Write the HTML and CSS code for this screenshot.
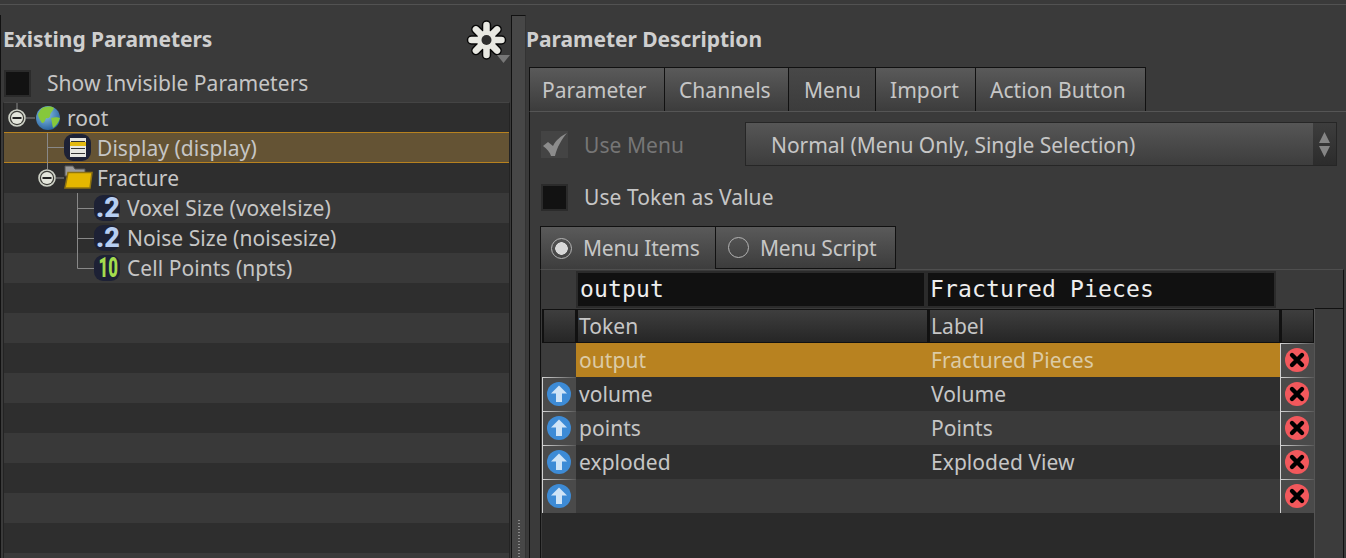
FILE: index.html
```html
<!DOCTYPE html>
<html lang="en">
<head>
<meta charset="utf-8">
<title>Parameter Editor</title>
<link rel="stylesheet" href="styles.css">
</head>
<body>
<svg class="defs" width="0" height="0" aria-hidden="true">
  <defs>
    <radialGradient id="sea" cx="40%" cy="35%" r="70%"><stop offset="0" stop-color="#8cc4ea"/><stop offset="1" stop-color="#25609c"/></radialGradient>
    <symbol id="expander" viewBox="0 0 18 18">
      <circle cx="9" cy="9" r="8" fill="#3d3d38" stroke="#cfd3c8" stroke-width="1.6"/>
      <circle cx="9" cy="9" r="6" fill="#e4e6dc"/>
      <rect x="4.5" y="8" width="9" height="2" fill="#222"/>
    </symbol>
    <symbol id="up" viewBox="0 0 26 26">
      <circle cx="13" cy="13" r="12" fill="#3d8bd6"/>
      <path d="M13 4.5 L21 12.5 H16 V21 H10 V12.5 H5 Z" fill="#cfe4f7"/>
    </symbol>
    <symbol id="del" viewBox="0 0 26 26">
      <circle cx="13" cy="13" r="12" fill="#f2585c"/>
      <path d="M8 8 L18 18 M18 8 L8 18" stroke="#000" stroke-width="4.4" stroke-linecap="round"/>
    </symbol>
    <symbol id="badge" viewBox="0 0 28 28">
      <rect x="1" y="1" width="26" height="26" rx="9" fill="#1d2135"/>
    </symbol>
  </defs>
</svg>

<div class="topline"></div>
<div class="main">
  <section class="left">
    <div class="left-head">
      <h2 class="title">Existing Parameters</h2>
      <svg class="gear" width="46" height="50" viewBox="0 0 46 50">
        <g transform="translate(21.500 24)">
          <g stroke="#000" stroke-width="9.500" stroke-linecap="round" opacity=".85">
            <path d="M0 -15V15M-15 0H15M-10.600 -10.600L10.600 10.600M10.600 -10.600L-10.600 10.600"/>
          </g>
          <g stroke="#e8e8e2" stroke-width="6.500" stroke-linecap="round">
            <path d="M0 -15V15M-15 0H15M-10.600 -10.600L10.600 10.600M10.600 -10.600L-10.600 10.600"/>
          </g>
          <circle r="9.500" fill="#e8e8e2"/>
          <circle r="5" fill="#2e2e2e"/>
        </g>
        <path d="M32 39H45L38.500 47Z" fill="#777"/>
      </svg>
    </div>
    <label class="check-row">
      <span class="box"></span>
      <span class="label">Show Invisible Parameters</span>
    </label>
    <div class="tree">
      <div class="row dark">
        <svg class="ind w60" viewBox="0 0 60 30">
          <path d="M13 0V7M22 15H31" stroke="#888" fill="none"/>
          <use href="#expander" x="4" y="6" width="18" height="18"/>
          <circle cx="44" cy="15" r="12" fill="url(#sea)"/>
          <path d="M37 6C41 3 47 3 50 5C49 8 47 9 46 12C47 14 44 16 42 15C41 18 40 20 38 20C36 17 34 14 34 11C35 9 36 8 37 6ZM47 15C50 14 54 14 56 15C55 19 52 23 49 25C48 22 48 18 47 15Z" fill="#86c83c"/>
        </svg>
        <span class="name">root</span>
      </div>
      <div class="row sel">
        <svg class="ind w90" viewBox="0 0 90 30">
          <path d="M43.500 0V30M43.500 14.500H60" stroke="#888" fill="none"/>
          <rect x="60" y="1" width="27" height="27" rx="9" fill="#1d2135"/>
          <rect x="66" y="5" width="16" height="19" fill="#e6e6e0"/>
          <rect x="66" y="9" width="16" height="4" fill="#e3b90f"/>
          <path d="M67 8.500H81M67 15.500H81M67 20.500H81" stroke="#333" stroke-width="1.200"/>
        </svg>
        <span class="name">Display (display)</span>
      </div>
      <div class="row dark">
        <svg class="ind w90" viewBox="0 0 90 30">
          <path d="M43.500 0V6M52 15H60" stroke="#888" fill="none"/>
          <use href="#expander" x="34" y="6" width="18" height="18"/>
          <path d="M61 3H69L71 6H81V13H61Z" fill="#9c9c9c" stroke="#555"/>
          <path d="M64 9.500H88L86 25H61Z" fill="#e4b700" stroke="#8f7410" stroke-width="1.500"/>
        </svg>
        <span class="name">Fracture</span>
      </div>
      <div class="row light">
        <svg class="ind w120" viewBox="0 0 120 30">
          <path d="M73.500 0V30M73.500 15.500H90" stroke="#888" fill="none"/>
          <use href="#badge" x="89" y="1" width="28" height="28"/>
          <text class="glyph blue" x="92" y="24">.2</text>
        </svg>
        <span class="name">Voxel Size (voxelsize)</span>
      </div>
      <div class="row dark">
        <svg class="ind w120" viewBox="0 0 120 30">
          <path d="M73.500 0V30M73.500 15.500H90" stroke="#888" fill="none"/>
          <use href="#badge" x="89" y="1" width="28" height="28"/>
          <text class="glyph blue" x="92" y="24">.2</text>
        </svg>
        <span class="name">Noise Size (noisesize)</span>
      </div>
      <div class="row light">
        <svg class="ind w120" viewBox="0 0 120 30">
          <path d="M73.500 0V15.500H90" stroke="#888" fill="none"/>
          <use href="#badge" x="89" y="1" width="28" height="28"/>
          <text class="glyph green" transform="translate(94.500 24) scale(.62 1)">10</text>
        </svg>
        <span class="name">Cell Points (npts)</span>
      </div>
      <div class="row dark"></div>
      <div class="row light"></div>
      <div class="row dark"></div>
      <div class="row light"></div>
      <div class="row dark"></div>
      <div class="row light"></div>
      <div class="row dark"></div>
      <div class="row light"></div>
      <div class="row dark"></div>
    </div>
  </section>

  <div class="splitter"><span class="grip"></span></div>

  <section class="right">
    <h2 class="title right-title">Parameter Description</h2>
    <nav class="tabs">
      <span class="tab t1">Parameter</span>
      <span class="tab t2">Channels</span>
      <span class="tab t3 active">Menu</span>
      <span class="tab t4">Import</span>
      <span class="tab t5">Action Button</span>
    </nav>
    <div class="panel">
      <div class="menu-row">
        <span class="box disabled">
          <svg width="27" height="27" viewBox="0 0 27 27"><path d="M2 15L7 11L12 15C15 9 20 5 26 2C21 8 16 16 14 25H10C9 21 6 18 2 15Z" fill="#8c8c8c"/></svg>
        </span>
        <span class="label dim">Use Menu</span>
        <div class="select">
          <span class="select-text">Normal (Menu Only, Single Selection)</span>
          <span class="select-arrows">
            <svg width="23" height="44" viewBox="0 0 23 44"><path d="M6 21L11.500 10L17 21ZM6 24H17L11.500 35Z" fill="#858585"/></svg>
          </span>
        </div>
      </div>
      <label class="token-row">
        <span class="box"></span>
        <span class="label">Use Token as Value</span>
      </label>
      <div class="subtabs">
        <span class="subtab s1"><i class="radio on"></i>Menu Items</span>
        <span class="subtab s2"><i class="radio"></i>Menu Script</span>
      </div>
      <div class="frame">
        <div class="table">
          <div class="editors">
            <span class="edit e1">output</span>
            <span class="edit e2">Fractured Pieces</span>
          </div>
          <div class="grid">
            <div class="cell head c-side"></div>
            <div class="cell head c-token">Token</div>
            <div class="cell head c-label">Label</div>
            <div class="cell head c-side2"></div>

            <div class="cell blank"></div>
            <div class="cell chosen">output</div>
            <div class="cell chosen">Fractured Pieces</div>
            <div class="cell btn"><svg class="ic"><use href="#del"/></svg></div>

            <div class="cell btn"><svg class="ic"><use href="#up"/></svg></div>
            <div class="cell dark">volume</div>
            <div class="cell dark col2">Volume</div>
            <div class="cell btn"><svg class="ic"><use href="#del"/></svg></div>

            <div class="cell btn"><svg class="ic"><use href="#up"/></svg></div>
            <div class="cell light">points</div>
            <div class="cell light col2">Points</div>
            <div class="cell btn"><svg class="ic"><use href="#del"/></svg></div>

            <div class="cell btn"><svg class="ic"><use href="#up"/></svg></div>
            <div class="cell dark">exploded</div>
            <div class="cell dark col2">Exploded View</div>
            <div class="cell btn"><svg class="ic"><use href="#del"/></svg></div>

            <div class="cell btn"><svg class="ic"><use href="#up"/></svg></div>
            <div class="cell light"></div>
            <div class="cell light col2"></div>
            <div class="cell btn"><svg class="ic"><use href="#del"/></svg></div>
          </div>
          <div class="table-rest"></div>
        </div>
        <div class="scrollbar"></div>
      </div>
    </div>
  </section>
</div>
</body>
</html>
```
FILE: styles.css
```css
* { box-sizing: border-box; }
html, body { margin: 0; padding: 0; }
body {
  width: 1346px;
  height: 558px;
  overflow: hidden;
  background: #3a3a3a;
  color: #c6c6c6;
  font-family: "Noto Sans", "Open Sans", sans-serif;
  font-size: 21px;
  letter-spacing: 0.05px;
  display: flex;
  flex-direction: column;
}
.defs { display: block; height: 0; }
.topline { height: 5px; border-bottom: 1px solid #525252; flex: none; }
.main { flex: 1; display: flex; min-height: 0; padding-top: 10px; }

.left { width: 511px; flex: none; display: flex; flex-direction: column; border-left: 1px solid #111; }
.left-head { height: 47px; display: flex; justify-content: space-between; align-items: flex-start; padding-top: 10px; }
.title { margin: 0; font-size: 21px; line-height: 28px; font-weight: 700; color: #cfcfcf; letter-spacing: -0.05px; }
.left-head .title { padding-left: 2px; }
.gear { margin-top: -9px; flex: none; }

.check-row { display: flex; align-items: center; height: 27px; margin-top: 8px; padding-left: 3px; }
.box { width: 27px; height: 27px; background: #121212; border: 2px solid #2b2b2b; flex: none; display: block; }
.box.disabled { background: #444; border: 0; }
.box.disabled svg { display: block; }
.check-row .label { margin-left: 16px; }
.label { line-height: 27px; }
.dim { color: #767676; }

.tree { margin: 5px 1px 0 2px; flex: 1; border-left: 1px solid #232323; border-right: 1px solid #232323; border-top: 1px solid #444; overflow: hidden; }
.row { height: 30px; display: flex; align-items: center; }
.row.dark { background: #2e2e2e; }
.row.light { background: #393939; }
.row.sel { background: #645334; border: 1px solid #b8821f; height: 31px; margin: -1px -1px 0; }
.ind { height: 30px; flex: none; display: block; }
.w60 { width: 60px; margin-right: 3px; }
.w90 { width: 90px; margin-right: 3px; }
.w120 { width: 120px; margin-right: 3px; }
.glyph { font-family: "Roboto", "Liberation Sans", sans-serif; font-weight: 900; font-size: 27px; }
.glyph.blue { fill: #b6cdf2; }
.glyph.green { fill: #a3dc4e; }
.name { white-space: nowrap; }

.splitter { width: 15px; margin-right: 3px; flex: none; background: #474747; border-left: 1px solid #111; border-top: 1px solid #111; border-right: 1px solid #333; display: flex; justify-content: center; align-items: flex-end; }
.grip { width: 2px; height: 38px; background: repeating-linear-gradient(to bottom, #8a8a8a 0 1px, transparent 1px 3px); }

.right { flex: 1; min-width: 0; display: flex; flex-direction: column; }
.right-title { padding-top: 10px; padding-bottom: 14px; height: 52px; margin-left: -3px; }
.tabs { display: flex; height: 45px; flex: none; width: 617px; border-top: 1px solid #111; border-bottom: 1px solid #111; border-left: 1px solid #111; }
.tab { display: flex; align-items: center; padding-left: 14px; border-right: 1px solid #111; background: linear-gradient(#5a5a5a, #3c3c3c); flex: none; }
.tab.active { background: linear-gradient(#484848, #3c3c3c); padding-left: 15px; }
.t1 { width: 135px; padding-left: 12px; }
.t2 { width: 124px; }
.t3 { width: 87px; }
.t4 { width: 100px; }
.t5 { width: 170px; }

.panel { flex: 1; min-height: 0; margin-top: -1px; border-left: 1px solid #111; border-top: 1px solid #555; background: #3a3a3a; display: flex; flex-direction: column; padding: 10px 0 0 11px; }
.menu-row { display: flex; align-items: center; height: 44px; }
.menu-row .label { margin-left: 16px; width: 161px; flex: none; padding-top: 2px; }
.select { width: 592px; height: 44px; border: 1px solid #262626; display: flex; justify-content: space-between; background: linear-gradient(#565656, #3d3d3d); flex: none; }
.select-text { padding-left: 25px; line-height: 44px; letter-spacing: -0.03px; }
.select-arrows { width: 23px; background: linear-gradient(#3d3d3d, #2c2c2c); }
.select-arrows svg { display: block; margin-top: -1px; }
.token-row { display: flex; align-items: center; height: 27px; margin-top: 18px; }
.token-row .label { margin-left: 16px; }
.subtabs { display: flex; height: 43px; margin-top: 15px; margin-left: -1px; flex: none; letter-spacing: -0.2px; }
.subtab { display: flex; align-items: center; background: linear-gradient(#5a5a5a, #3c3c3c); border: 1px solid #111; border-bottom: 0; }
.s1 { width: 176px; padding-left: 10px; background: linear-gradient(#5a5a5a, #3d3d3d); }
.s2 { width: 181px; padding-left: 12px; border-bottom: 1px solid #111; margin-left: -1px; }
.radio { display: block; width: 21px; height: 21px; border-radius: 50%; border: 1.500px solid #b4b4b4; margin-right: 11px; flex: none; }
.radio.on { background: radial-gradient(circle, #d8d8d8 0 6px, transparent 6.500px); }

.frame { flex: 1; min-height: 0; margin-left: -1px; border-top: 1px solid #4e4e4e; border-left: 1px solid #111; border-right: 1px solid #111; width: 804px; display: flex; }
.table { width: 773px; flex: none; padding-left: 1px; padding-top: 1px; display: flex; flex-direction: column; }
.editors { height: 38px; padding-left: 34px; display: flex; flex: none; }
.edit { height: 37px; width: 350px; background: #111; border: 2px solid #2b2b2b; font-family: "DejaVu Sans Mono", monospace; font-size: 23px; letter-spacing: 0.15px; color: #eee; line-height: 33px; padding-left: 2px; }
.grid { display: grid; grid-template-columns: 34px 352px 352px 34px; grid-auto-rows: 34px; flex: none; }
.cell { padding-left: 3px; line-height: 35px; white-space: nowrap; }
.head { background: linear-gradient(#3e3e3e, #262626); border: 1px solid #111; border-left-width: 2px; padding-left: 1px; line-height: 33px; }
.blank { background: #3c3c3c; }
.chosen { background: #b88220; color: #dccba6; }
.cell.dark { background: #2e2e2e; }
.cell.light { background: #3a3a3a; }
.btn { background: #4a4a4a; border-left: 1px solid #d4d4d4; border-top: 1px solid; border-image: linear-gradient(to right, #d4d4d4, #555) 1; padding: 3px 0 0 3px; }
.ic { width: 26px; height: 26px; display: block; }
.table-rest { flex: 1; background: #2a2a2a; }
.scrollbar { flex: 1; background: #3c3c3c; margin-top: 38px; border-top: 1px solid #111; border-left: 1px solid #555; }
```
